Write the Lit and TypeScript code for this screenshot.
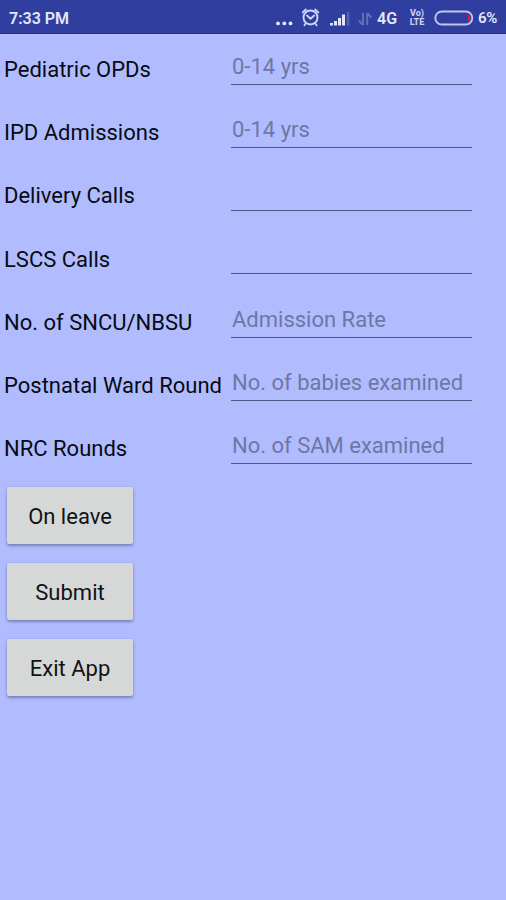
import { LitElement, html, css } from "lit";
import { customElement } from "lit/decorators.js";

const fields: [string, string][] = [
  ["Pediatric OPDs", "0-14 yrs"],
  ["IPD Admissions", "0-14 yrs"],
  ["Delivery Calls", ""],
  ["LSCS Calls", ""],
  ["No. of SNCU/NBSU", "Admission Rate"],
  ["Postnatal Ward Round", "No. of babies examined"],
  ["NRC Rounds", "No. of SAM examined"],
];

@customElement("status-bar")
class StatusBar extends LitElement {
  static styles = css`
    :host {
      display: flex;
      align-items: center;
      box-sizing: border-box;
      height: 34px;
      padding: 3px 8px 0 9px;
      background: #303f9f;
      border-bottom: 1px solid #1b2f9c;
      color: #e3e7fb;
      font: 600 16px/20px Roboto, sans-serif;
    }
    .time { flex: 1; padding-top: 1px; }
    .icons { display: block; width: 98px; height: 32px; margin-top: -2px; }
    .net { width: 21px; margin-left: 4px; padding-top: 1px; white-space: nowrap; }
    .volte {
      display: flex;
      flex-direction: column;
      align-items: center;
      width: 18px;
      margin: 0 0 0 10px;
      font: 800 9px/9px Roboto, sans-serif;
      color: #c9d0f3;
    }
    .battery { display: block; width: 40px; height: 16px; margin: -1px 4px 0 8px; }
    .pct { font-size: 15px; letter-spacing: -0.3px; width: 20px; white-space: nowrap; }
  `;
  render() {
    return html`
      <span class="time">7:33 PM</span>
      <svg class="icons" viewBox="275 0 98 32" fill="none">
        <g fill="#e3e7fb">
          <circle cx="278" cy="22.4" r="1.9" /><circle cx="284.3" cy="22.4" r="1.9" /><circle cx="290.5" cy="22.4" r="1.9" />
        </g>
        <g stroke="#cfd6f6" stroke-linecap="round">
          <circle cx="310.5" cy="16.5" r="7" stroke-width="1.9" />
          <path d="M307 14.5l3.5 3.2 3.7-3.2" stroke-width="1.8" />
          <path d="M302.7 11.5l3.2-3M318.3 11.5l-3.2-3M305.7 22.5l-1.3 1.7M315.3 22.5l1.3 1.7" stroke-width="1.8" />
        </g>
        <g fill="#e3e7fb">
          <rect x="330" y="22" width="3" height="2.5" /><rect x="334" y="20" width="3" height="4.5" />
          <rect x="338" y="17" width="3" height="7.5" /><rect x="342" y="13.5" width="3" height="11" />
        </g>
        <rect x="346.8" y="11" width="2.6" height="13.5" fill="#5462b3" />
        <path d="M363 12v12M359 19.5l4 4.5M367.2 24v-12M367.2 12l4 4.5" stroke="#6370bb" stroke-width="2" />
      </svg>
      <span class="net">4G</span>
      <span class="volte"><span>Vo)</span><span>LTE</span></span>
      <svg class="battery" viewBox="0 0 40 16">
        <path d="M34.5 4.5q3 3.5 0 7z" fill="#e0203c" stroke="#e0203c" />
        <rect x="1.3" y="1.5" width="37" height="13" rx="6.5" fill="none" stroke="#bfc7ef" stroke-width="1.9" />
      </svg>
      <span class="pct">6%</span>
    `;
  }
}

@customElement("app-root")
class AppRoot extends LitElement {
  static styles = css`
    :host {
      display: block;
      height: 900px;
      overflow: hidden;
      background: #b1bcff;
      font: 400 22px/26px Roboto, sans-serif;
      color: #080a12;
    }
    .row {
      display: grid;
      grid-template-columns: 227px 241px;
      height: 63.2px;
      padding-left: 4px;
    }
    .label { padding-top: 23px; white-space: nowrap; }
    .input {
      box-sizing: border-box;
      height: 50.8px;
      padding: 20px 0 0 1px;
      border-bottom: 1.5px solid #4d5880;
      color: #6d77a5;
      white-space: nowrap;
    }
    .actions {
      display: flex;
      flex-direction: column;
      gap: 19px;
      padding: 11px 0 0 7px;
    }
    .btn {
      width: 126px;
      height: 57px;
      padding: 2px 0 0;
      border: 0;
      border-radius: 2px;
      background: #d6d8d8;
      box-shadow: 0 2px 3px rgba(50, 56, 90, 0.4), 0 0 2px rgba(50, 56, 90, 0.2);
      color: #111213;
      font: inherit;
    }
  `;
  render() {
    return html`
      <status-bar></status-bar>
      ${fields.map(([label, hint]) => html`
        <div class="row">
          <span class="label">${label}</span>
          <span class="input">${hint}</span>
        </div>`)}
      <div class="actions">
        ${["On leave", "Submit", "Exit App"].map((t) => html`<button class="btn">${t}</button>`)}
      </div>
    `;
  }
}
